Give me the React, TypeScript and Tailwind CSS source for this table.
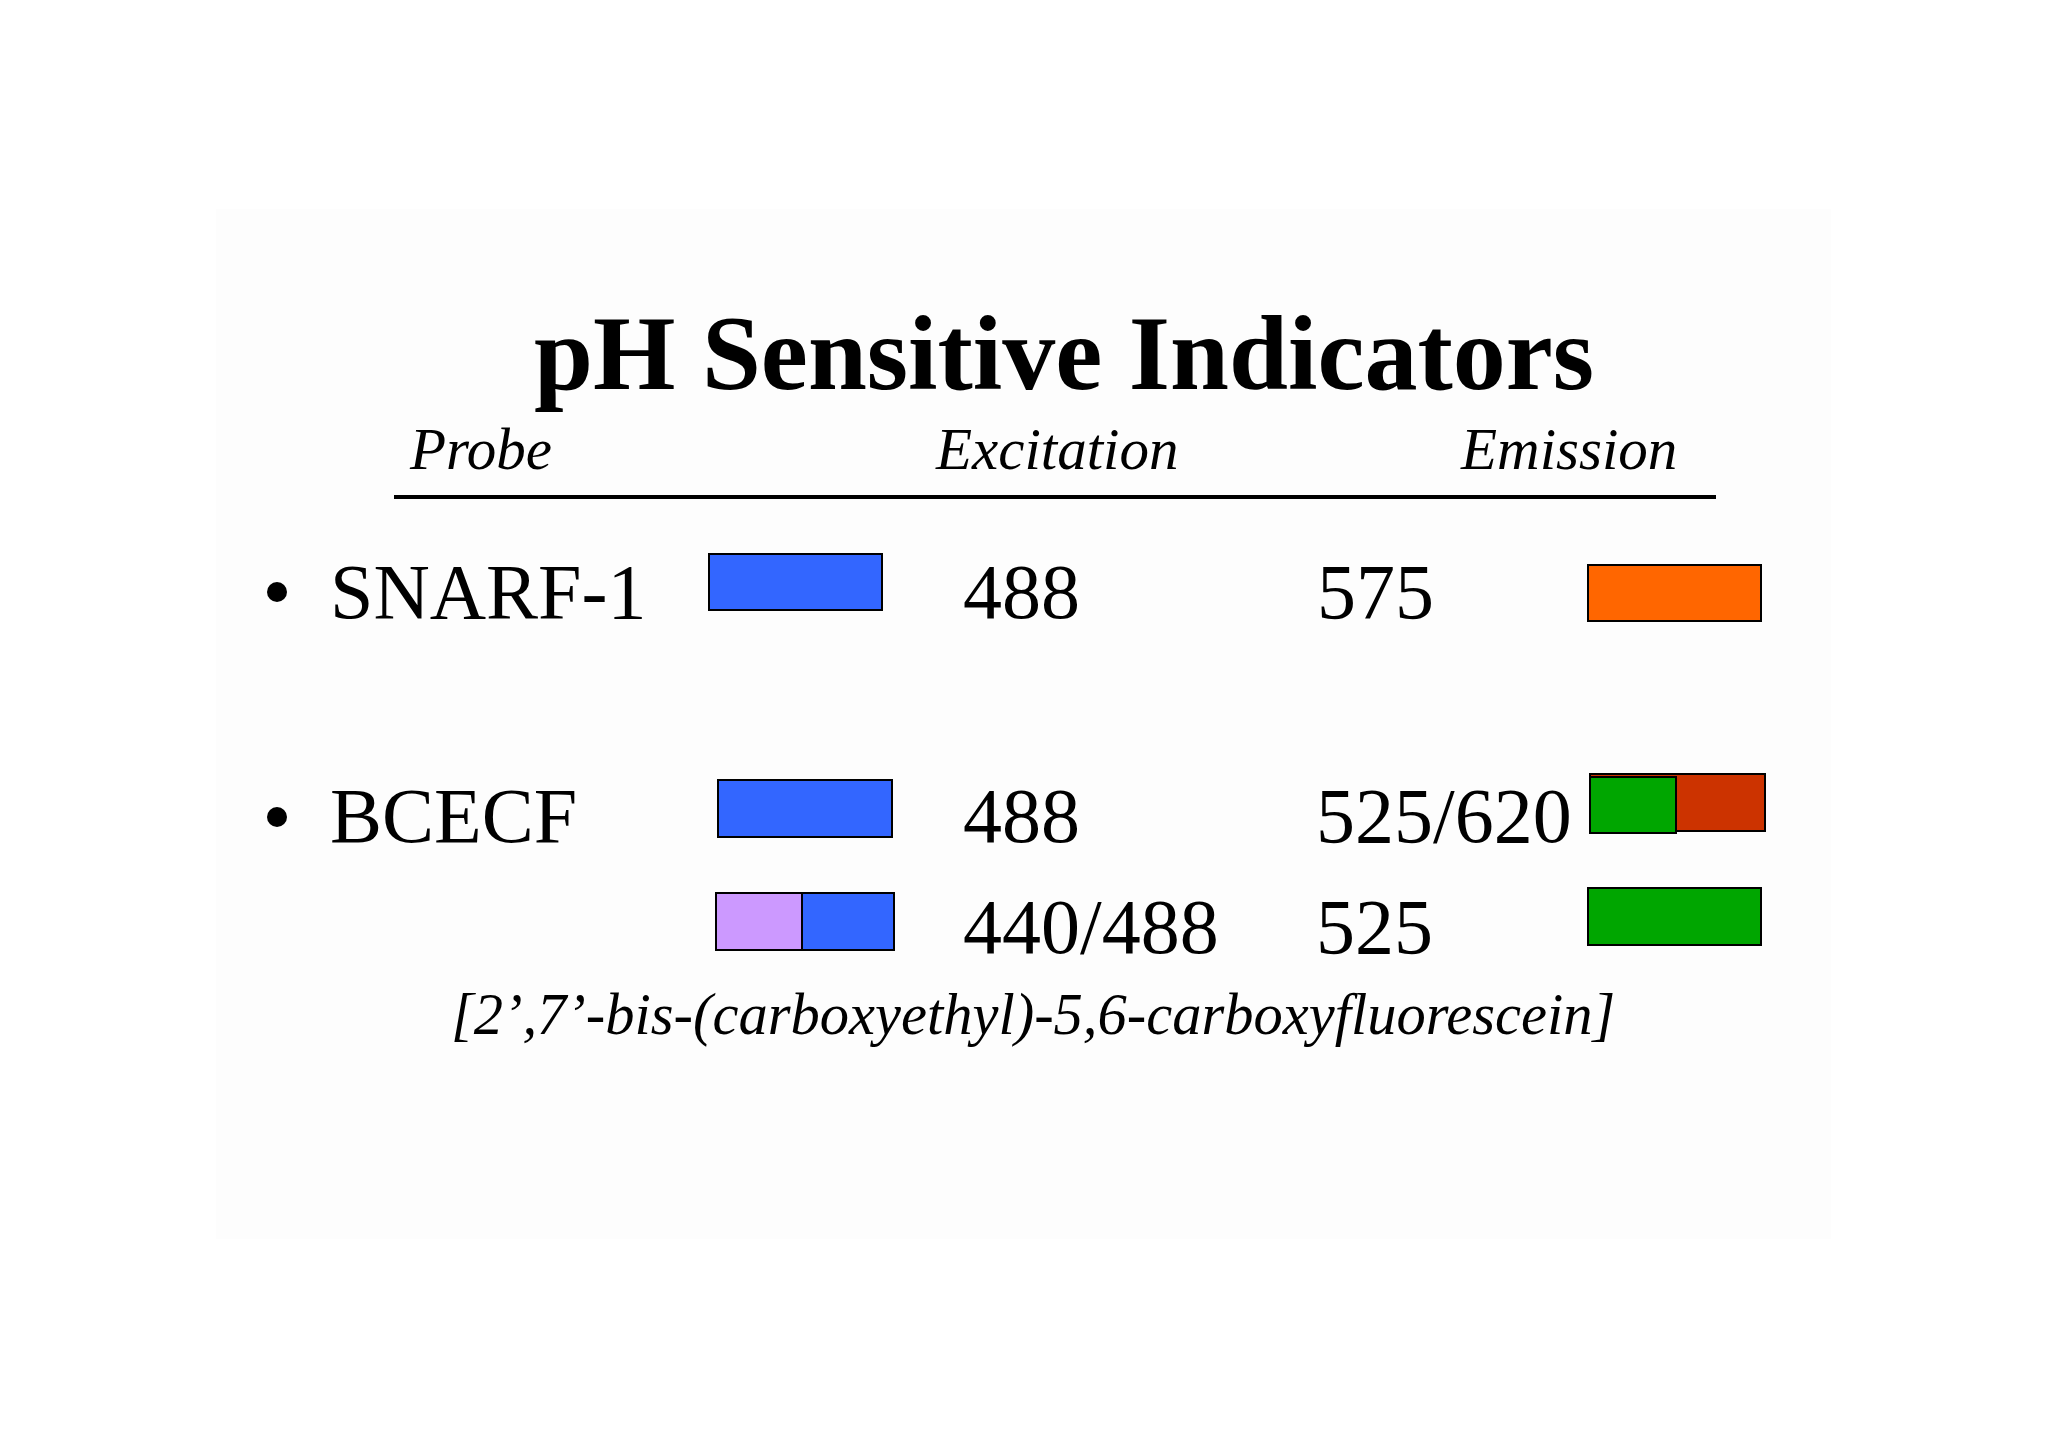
import React from "react";

const serif = { fontFamily: '"Liberation Serif", "Times New Roman", serif' };

export default function App() {
  return (
    <div className="w-[2048px] h-[1448px] bg-white overflow-hidden pt-[209px] pl-[216px] text-black" style={serif}>
      <div className="w-[1615px] h-[1030px] bg-[#fdfdfd] flex flex-col">
        {/* Title */}
        <div className="mt-[92px] ml-[318px] h-[106px] text-[106px] leading-none font-bold whitespace-nowrap">
          pH Sensitive Indicators
        </div>

        {/* Column headers */}
        <div className="mt-[13px] h-[59px] flex text-[59px] leading-none italic whitespace-nowrap">
          <div className="ml-[194px] w-[526px]">Probe</div>
          <div className="w-[525px]">Excitation</div>
          <div>Emission</div>
        </div>

        {/* Rule */}
        <div className="mt-[16px] ml-[178px] w-[1322px] h-[4px] bg-black" />

        {/* Row 1: SNARF-1 */}
        <div className="mt-[54px] h-[70px] flex items-start text-[78px] leading-none whitespace-nowrap">
          <div className="ml-[51px] mt-[29px] w-[20px] h-[20px] rounded-full bg-black shrink-0" />
          <div className="ml-[43px] w-[378px] shrink-0">SNARF-1</div>
          <div className="w-[175px] h-[58px] bg-[#3366ff] border-2 border-black shrink-0" />
          <div className="ml-[80px] w-[354px] shrink-0">488</div>
          <div className="w-[270px] shrink-0">575</div>
          <div className="mt-[11px] w-[175px] h-[58px] bg-[#ff6600] border-2 border-black shrink-0" />
        </div>

        {/* Row 2: BCECF */}
        <div className="mt-[150px] h-[78px] flex items-start text-[78px] leading-none whitespace-nowrap">
          <div className="ml-[51px] mt-[34px] w-[20px] h-[20px] rounded-full bg-black shrink-0" />
          <div className="ml-[43px] mt-[4px] w-[387px] shrink-0">BCECF</div>
          <div className="mt-[6px] w-[176px] h-[59px] bg-[#3366ff] border-2 border-black shrink-0" />
          <div className="ml-[70px] mt-[4px] w-[353px] shrink-0">488</div>
          <div className="mt-[4px] w-[273px] shrink-0">525/620</div>
          <div className="w-[177px] h-[59px] bg-[#cc3300] border-2 border-black shrink-0">
            <div className="-ml-[2px] mt-[1px] w-[88px] h-[58px] bg-[#00a600] border-2 border-black" />
          </div>
        </div>

        {/* Row 3: BCECF dual excitation */}
        <div className="mt-[36px] h-[66px] flex items-start text-[78px] leading-none whitespace-nowrap">
          <div className="ml-[499px] mt-[5px] w-[180px] h-[59px] flex border-2 border-black shrink-0">
            <div className="w-[86px] h-full bg-[#cc99ff] border-r-2 border-black" />
            <div className="flex-1 h-full bg-[#3366ff]" />
          </div>
          <div className="ml-[68px] mt-[1px] w-[353px] shrink-0">440/488</div>
          <div className="mt-[1px] w-[271px] shrink-0">525</div>
          <div className="w-[175px] h-[59px] bg-[#00a600] border-2 border-black shrink-0" />
        </div>

        {/* Footnote */}
        <div className="mt-[33px] ml-[235px] text-[58.5px] leading-none italic whitespace-nowrap">
          [2’,7’-bis-(carboxyethyl)-5,6-carboxyfluorescein]
        </div>
      </div>
    </div>
  );
}
